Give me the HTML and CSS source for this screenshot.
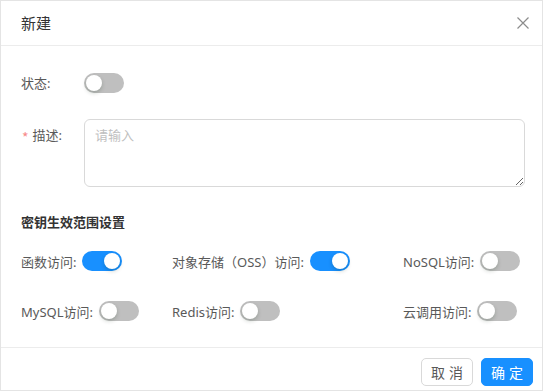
FILE: index.html
```html
<!DOCTYPE html>
<html lang="zh-CN">
<head>
<meta charset="utf-8">
<title>新建</title>
<link rel="stylesheet" href="styles.css">
</head>
<body>
<div class="modal">
  <div class="modal-header">
    <span class="modal-title">新建</span>
    <button class="close" aria-label="关闭">
      <svg width="12" height="12" viewBox="0 0 12 12"><path d="M0.5 0.5L11.5 11.5M11.5 0.5L0.5 11.5" stroke="#8c8c8c" stroke-width="1.2" fill="none"/></svg>
    </button>
  </div>
  <div class="modal-body">
    <div class="form-item">
      <label class="form-label">状态:</label>
      <div class="form-control">
        <span class="switch"><span class="knob"></span></span>
      </div>
    </div>
    <div class="form-item form-item-top">
      <label class="form-label"><span class="req">*</span>描述:</label>
      <div class="form-control">
        <textarea class="textarea" placeholder="请输入"></textarea>
      </div>
    </div>
    <div class="section-title">密钥生效范围设置</div>
    <div class="scope-grid">
      <div class="scope-item"><span class="scope-label">函数访问:</span><span class="switch on"><span class="knob"></span></span></div>
      <div class="scope-item"><span class="scope-label">对象存储（OSS）访问:</span><span class="switch on"><span class="knob"></span></span></div>
      <div class="scope-item"><span class="scope-label">NoSQL访问:</span><span class="switch"><span class="knob"></span></span></div>
      <div class="scope-item"><span class="scope-label">MySQL访问:</span><span class="switch"><span class="knob"></span></span></div>
      <div class="scope-item"><span class="scope-label">Redis访问:</span><span class="switch"><span class="knob"></span></span></div>
      <div class="scope-item"><span class="scope-label">云调用访问:</span><span class="switch"><span class="knob"></span></span></div>
    </div>
  </div>
  <div class="modal-footer">
    <button class="btn"><span>取消</span></button>
    <button class="btn btn-primary"><span>确定</span></button>
  </div>
</div>
</body>
</html>
```
FILE: styles.css
```css
* { box-sizing: border-box; }
html, body { margin: 0; padding: 0; background: #fff; }
body {
  font-family: "Noto Sans", "Noto Sans CJK SC", sans-serif;
  font-size: 13px;
  color: #595959;
}
.modal {
  width: 543px;
  height: 391px;
  border: 1px solid #e4e4e4;
  display: flex;
  flex-direction: column;
  background: #fff;
}
.modal-header {
  height: 45px;
  border-bottom: 1px solid #ececec;
  display: flex;
  align-items: center;
  justify-content: space-between;
  padding: 0 13px 0 20px;
}
.modal-title {
  font-size: 15px;
  color: #333;
  line-height: 22px;
}
.close {
  border: 0;
  background: none;
  padding: 0;
  width: 12px;
  height: 12px;
  display: flex;
}
.modal-body {
  flex: 1;
  padding: 21px 17px 0 20px;
}
.form-item {
  display: flex;
  align-items: center;
  margin-bottom: 20px;
  min-height: 32px;
}
.form-item-top { align-items: flex-start; }
.form-label {
  width: 63px;
  flex: none;
  line-height: 32px;
  color: #595959;
  display: flex;
  align-items: center;
}
.req {
  color: #f78989;
  margin: 0 4px 0 1px;
  font-family: "Noto Sans CJK SC", sans-serif;
  font-size: 14px;
  position: relative;
  top: 2px;
}
.form-control { flex: 1; display: flex; }
.textarea {
  width: 100%;
  height: 68px;
  border: 1px solid #d9d9d9;
  border-radius: 6px;
  padding: 4px 10px;
  font-family: inherit;
  font-size: 13px;
  line-height: 22px;
  color: #595959;
  resize: vertical;
  outline: none;
}
.textarea::placeholder { color: #bfbfbf; }
.section-title {
  margin-top: 25px;
  font-weight: bold;
  color: #333;
  line-height: 20px;
  font-size: 13px;
}
.scope-grid {
  display: grid;
  grid-template-columns: 151px 231px 1fr;
  row-gap: 18px;
  margin-top: 13px;
}
.scope-item {
  display: flex;
  align-items: center;
  height: 32px;
}
.scope-label { margin-right: 6px; color: #595959; }
.switch {
  position: relative;
  display: inline-block;
  width: 40px;
  height: 20px;
  border-radius: 10px;
  background: #bfbfbf;
  flex: none;
}
.switch.on { background: #1890ff; }
.knob {
  position: absolute;
  top: 2px;
  left: 2px;
  width: 16px;
  height: 16px;
  border-radius: 50%;
  background: #fff;
  box-shadow: 0 2px 4px rgba(0, 35, 11, 0.2);
}
.switch.on .knob { left: 22px; }
.modal-footer {
  border-top: 1px solid #ececec;
  display: flex;
  justify-content: flex-end;
  gap: 8px;
  padding: 10px 9px 4px 0;
}
.btn {
  width: 52px;
  height: 28px;
  border: 1px solid #d9d9d9;
  border-radius: 5px;
  background: #fff;
  color: #595959;
  font-family: inherit;
  font-size: 14px;
  padding: 0;
  display: flex;
  align-items: center;
  justify-content: center;
}
.btn span { letter-spacing: 4px; margin-right: -4px; }
.btn-primary {
  background: #1890ff;
  border-color: #1890ff;
  color: #fff;
}
```
